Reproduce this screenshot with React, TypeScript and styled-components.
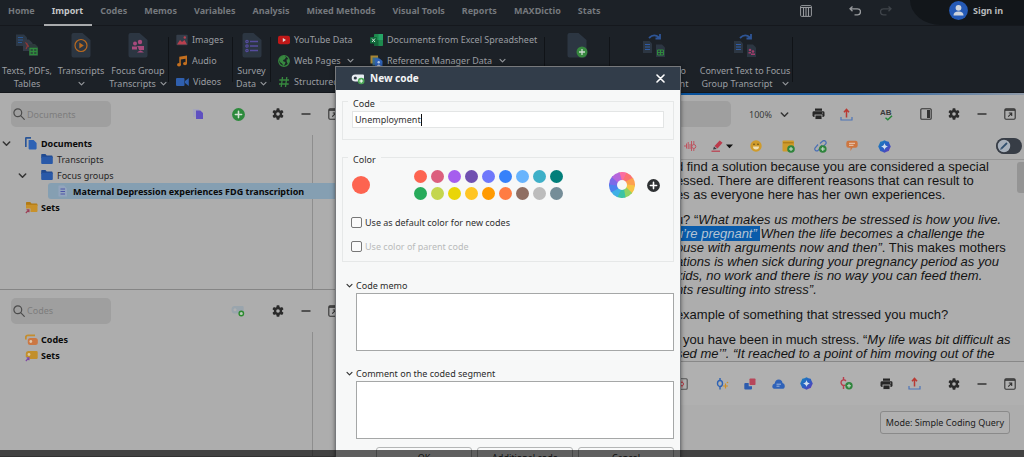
import React from 'react';
import styled, { createGlobalStyle, css } from 'styled-components';

const Global = createGlobalStyle`
  * { box-sizing: border-box; }
  html, body, #root { height: 100%; margin: 0; }
  body { overflow: hidden; background: #adadad; }
  body, button, input, textarea, select { font-family: "Noto Sans", "Open Sans", sans-serif; font-size: 9px; line-height: 13px; }
  button { border: 0; background: none; padding: 0; margin: 0; color: inherit; }
  svg { display: block; flex: none; }
`;

const Page = styled.div`
  position: relative;
  height: 100vh;
  display: flex;
  flex-direction: column;
  overflow: hidden;
`;

/* ---------- header ---------- */

const Header = styled.header`
  background: #1c2127;
  color: #9b9ea2;
  border-bottom: 1px solid #14171c;
`;
const TopBar = styled.div`
  display: flex;
  height: 26px;
  border-bottom: 1px solid #15181d;
`;
const Tabs = styled.nav`
  display: flex;
  flex: 1;
`;
const Tab = styled.button<{ $active?: boolean }>`
  height: 26px;
  padding: 0 9px 3px 8px;
  font-weight: 700;
  white-space: nowrap;
  color: ${p => (p.$active ? '#c4c6c8' : '#75797e')};
  border-bottom: 2px solid ${p => (p.$active ? '#a9abad' : 'transparent')};
`;
const TopActions = styled.div`
  display: flex;
  align-items: center;
  padding: 0 18px 4px 0;
  gap: 19px;
`;
const GridButton = styled.button`
  margin-right: 18px;
`;
const Account = styled.button`
  display: flex;
  align-items: center;
  gap: 5px;
  width: 114px;
  padding: 0 0 5px 39px;
  background: #12161a;
  border-bottom-left-radius: 32px 26px;
  font-weight: 700;
  color: #b9bbbd;
  white-space: nowrap;
`;

const Ribbon = styled.div`
  display: flex;
  height: 66px;
`;
const BigButton = styled.button<{ $w: number }>`
  flex: none;
  width: ${p => p.$w}px;
  height: 66px;
  padding-top: 6px;
  display: flex;
  flex-direction: column;
  align-items: center;
  gap: 5px;
  white-space: nowrap;
  text-align: center;
`;
const BigLabel = styled.span`
  display: flex;
  flex-direction: column;
  align-items: center;
`;
const LabelLine = styled.span<{ $gap?: number }>`
  display: flex;
  align-items: center;
  justify-content: center;
  gap: ${p => p.$gap ?? 4}px;
  height: 13px;
`;
const Divider = styled.span`
  width: 1px;
  margin: 11px 0 10px;
  background: #101317;
`;
const SmallColumn = styled.div<{ $w: number }>`
  flex: none;
  width: ${p => p.$w}px;
  padding: 3px 0 0 7px;
  display: flex;
  flex-direction: column;
`;
const SmallButton = styled.button`
  display: flex;
  align-items: center;
  height: 21px;
  gap: 4px;
  white-space: nowrap;
`;

/* ---------- workspace ---------- */

const Workspace = styled.main`
  flex: 1;
  min-height: 0;
  display: grid;
  grid-template-columns: 34% 1fr;
  grid-template-rows: minmax(0, 1fr);
  background: #adadad;
`;
const LeftSide = styled.section`
  display: grid;
  grid-template-rows: 54fr 46fr;
  min-width: 0;
`;
const Panel = styled.section`
  display: flex;
  flex-direction: column;
  min-height: 0;
  border-bottom: 1px solid #858585;
`;
const PanelBar = styled.div`
  display: flex;
  align-items: center;
  height: 42px;
  padding-left: 11px;
`;
const SearchBox = styled.label`
  display: flex;
  align-items: center;
  gap: 2px;
  width: 100px;
  height: 26px;
  padding-left: 2px;
  border-radius: 5px;
  background: #9f9f9f;
`;
const SearchInput = styled.input`
  width: 80px;
  padding: 0;
  border: 0;
  outline: 0;
  background: transparent;
  &::placeholder { color: #7d7d7d; opacity: 1; }
`;
const Spacer = styled.span`
  flex: 1;
`;
const Tools = styled.div<{ $after?: number }>`
  display: flex;
  flex: none;
  margin-right: ${p => p.$after ?? 12}px;
`;
const Tool = styled.button<{ $w?: number }>`
  display: flex;
  align-items: center;
  justify-content: center;
  gap: 3px;
  width: ${p => p.$w ?? 28}px;
  height: 24px;
`;
const Tree = styled.ul`
  flex: 1;
  margin: 0;
  padding: 0;
  list-style: none;
  background: linear-gradient(90deg, transparent calc(100% - 36px), #8e8e8e 0, #8e8e8e calc(100% - 35px), transparent 0);
`;
const TreeRow = styled.li<{ $level: number; $bold?: boolean; $selected?: boolean }>`
  display: flex;
  align-items: center;
  height: 16px;
  margin-left: ${p => p.$level * 16}px;
  font-weight: ${p => (p.$bold ? 700 : 400)};
  color: ${p => (p.$bold ? '#0a0a0a' : '#262626')};
  white-space: nowrap;
  ${p => p.$selected && css`background: #859fb2; border-radius: 3px 0 0 3px;`}
`;
const Twisty = styled.span<{ $narrow?: boolean }>`
  display: flex;
  width: ${p => (p.$narrow ? 9 : 25)}px;
  padding-left: 2px;
`;
const NodeIcon = styled.span`
  display: flex;
  width: 16px;
`;

/* ---------- document browser ---------- */

const RightSide = styled.section`
  display: grid;
  grid-template-rows: minmax(0, 1fr) auto;
  min-width: 0;
`;
const Browser = styled.section`
  display: flex;
  flex-direction: column;
  min-height: 0;
  overflow: hidden;
  border-top: 2px solid;
  border-image: linear-gradient(90deg, #07509a 50%, #2560a0 75%, #8f9aa8 100%) 1;
`;
const BrowserBar = styled.div`
  display: flex;
  flex: none;
  align-items: center;
  justify-content: flex-end;
  height: 38px;
`;
const BrowserSearch = styled.input`
  width: 300px;
  height: 26px;
  margin-right: 18px;
  border: 0;
  border-radius: 5px;
  background: #9f9f9f;
`;
const Zoom = styled.label`
  display: flex;
  align-items: center;
  width: 55px;
`;
const ZoomSelect = styled.select`
  appearance: none;
  width: 31px;
  padding: 0;
  border: 0;
  background: transparent;
  color: #3a3a3a;
`;
const CodingBar = styled.div`
  display: flex;
  flex: none;
  align-items: center;
  justify-content: flex-end;
  height: 27px;
  border-bottom: 1px solid #969696;
`;
const ToggleTrack = styled.button`
  display: flex;
  align-items: center;
  width: 26px;
  height: 16px;
  margin-right: 2px;
  border-radius: 8px;
  background: #373d46;
`;
const Transcript = styled.div`
  flex: 1;
  min-height: 0;
  display: grid;
  grid-template-columns: 1fr 7px;
  overflow: hidden;
`;
const Lines = styled.div`
  overflow: hidden;
  font-family: "Liberation Sans", Arial, sans-serif;
  font-size: 13px;
  line-height: 14px;
  color: #141414;
`;
const Paragraph = styled.p`
  margin: 0 0 11px;
`;
const TextLine = styled.span`
  display: grid;
  grid-template-columns: 49% 1fr;
  white-space: pre;
`;
const LineStart = styled.span`
  text-align: right;
`;
const Mark = styled.mark`
  background: #0a5cab;
  color: #b4c4d4;
`;
const ScrollThumb = styled.span`
  height: 31px;
  margin-top: 2px;
  border-radius: 3px 0 0 3px;
  background: #949494;
`;
const Retrieved = styled.section`
  height: 96px;
  border-top: 1px solid #888;
`;
const RetrievedBar = styled.div`
  display: flex;
  align-items: center;
  justify-content: flex-end;
  height: 43px;
  background: #b0b0b0;
`;
const ModeRow = styled.div`
  display: flex;
  justify-content: flex-end;
  padding: 6px 14px;
`;
const ModeButton = styled.button`
  width: 130px;
  height: 23px;
  border: 1px solid #8a8a8a;
  border-radius: 3px;
  color: #1c1c1c;
  background: #b0b0b0;
  white-space: nowrap;
`;

/* ---------- dialog ---------- */

const Overlay = styled.div`
  position: absolute;
  inset: 66px 8px 0 0;
  display: flex;
  justify-content: center;
  align-items: flex-start;
`;
const Dialog = styled.form`
  width: 346px;
  background: #f7f8f8;
  color: #2b2b2b;
  border: 1px solid #77797c;
  border-bottom: 0;
  box-shadow: 0 0 4px rgba(0, 0, 0, 0.5);
`;
const TitleBar = styled.div`
  display: flex;
  align-items: center;
  height: 23px;
  padding: 0 15px;
  gap: 5px;
  background: #323d4a;
  color: #f4f5f6;
`;
const Title = styled.h1`
  flex: 1;
  margin: 0;
  font-size: 10px;
  line-height: 15px;
  font-weight: 700;
`;
const DialogBody = styled.div`
  padding: 2px 6px 0;
`;
const Group = styled.fieldset<{ $space: number }>`
  margin: 0 0 ${p => p.$space}px;
  padding: 0 9px 3px;
  min-width: 0;
  border: 1px solid #e6e8e8;
`;
const Legend = styled.legend`
  margin-left: -4px;
  padding: 5px 5px 0;
  height: 18px;
`;
const CodeField = styled.div`
  display: flex;
  align-items: center;
  height: 17px;
  margin: 1px 0 8px;
  padding: 0 2px;
  border: 1px solid #e3e5e5;
  background: #fff;
`;
const CodeInput = styled.input`
  field-sizing: content;
  padding: 0;
  border: 0;
  outline: 0;
  background: transparent;
  color: #333;
  caret-color: transparent;
`;
const TextCursor = styled.span`
  width: 1px;
  height: 12px;
  background: #111;
`;
const Palette = styled.div`
  display: flex;
  align-items: center;
  height: 38px;
  margin-bottom: 6px;
`;
const Chosen = styled.span`
  width: 18px;
  height: 18px;
  margin-right: 44px;
  border-radius: 50%;
  background: #fd6450;
`;
const Swatches = styled.div`
  display: grid;
  grid-template-columns: repeat(9, 13px);
  gap: 4px;
  flex: 1;
`;
const Swatch = styled.button<{ $c: string }>`
  width: 13px;
  height: 13px;
  border-radius: 50%;
  background: ${p => p.$c};
`;
const WheelButtons = styled.div`
  display: flex;
  align-items: center;
  gap: 12px;
  padding-right: 4px;
`;
const Check = styled.label<{ $off?: boolean }>`
  display: flex;
  align-items: center;
  gap: 3px;
  height: 24px;
  color: ${p => (p.$off ? '#b9bbbb' : '#2f2f2f')};
`;
const Box = styled.input`
  appearance: none;
  width: 11px;
  height: 11px;
  margin: 0 0 0 -1px;
  border: 1px solid #777;
  border-radius: 2px;
  background: #fafafa;
`;
const Section = styled.div`
  margin-bottom: 15px;
`;
const SectionLabel = styled.label`
  display: flex;
  align-items: center;
  gap: 3px;
  height: 15px;
  padding-left: 4px;
`;
const Memo = styled.textarea`
  display: block;
  width: calc(100% - 14px);
  height: 58px;
  margin-left: 14px;
  border: 1px solid #a5a7a7;
  border-radius: 0;
  outline: 0;
  resize: none;
  background: #fff;
`;
const DialogButtons = styled.div`
  display: grid;
  grid-template-columns: repeat(3, 1fr);
  gap: 5px;
  margin: -7px 0 0 34px;
`;
const DialogButton = styled.button`
  height: 20px;
  border: 1px solid #b4b6b6;
  border-radius: 3px;
  background: #f9fafa;
`;
const PlayerShade = styled.div`
  position: absolute;
  inset: auto 0 0 0;
  height: 7px;
  background: rgba(0, 0, 0, 0.62);
`;

/* ---------- icons ---------- */

const Chevron = ({ c = '#333', s = 9 }: { c?: string; s?: number }) => (
  <svg width={s} height={s} viewBox="0 0 9 9" fill="none" stroke={c} strokeWidth="1.5" strokeLinecap="round" strokeLinejoin="round"><path d="M1.3 3l3.2 3.2L7.7 3" /></svg>
);
const RibbonChevron = () => <Chevron c="#94979b" s={7} />;
const SearchIcon = () => (
  <svg width="12" height="12" viewBox="0 0 12 12" fill="none" stroke="#4c4c4c" strokeWidth="1.2" strokeLinecap="round"><circle cx="4.8" cy="4.8" r="3.9" /><path d="M7.7 7.7l3.6 3.6" /></svg>
);
const Gear = () => (
  <svg width="12" height="12" viewBox="0 0 12 12"><g fill="#2b2b2b">
    {[0, 60, 120].map(a => <rect key={a} x="4.5" y="0.3" width="3" height="11.4" rx="0.8" transform={`rotate(${a} 6 6)`} />)}
    <circle cx="6" cy="6" r="4.1" /></g><circle cx="6" cy="6" r="1.8" fill="#adadad" /></svg>
);
const Minus = () => <svg width="10" height="10" viewBox="0 0 10 10"><path d="M.5 5h9" stroke="#333" strokeWidth="1.5" /></svg>;
const PopOut = () => (
  <svg width="12" height="12" viewBox="0 0 12 12" fill="none" stroke="#333"><rect x=".8" y=".8" width="10.4" height="10.4" rx="1.2" strokeWidth="1.1" /><path d="M1 2h10" strokeWidth="1.6" /><path d="M4.2 8.6l3.3-3.3M4.8 5h2.9v2.9" strokeWidth="1.1" /></svg>
);
const PlusCircle = ({ s = 13, c = '#2d8a3c', p = '#d5e2d6' }: { s?: number; c?: string; p?: string }) => (
  <svg width={s} height={s} viewBox="0 0 13 13"><circle cx="6.5" cy="6.5" r="6.4" fill={c} /><path d="M6.5 3.4v6.2M3.4 6.5h6.2" stroke={p} strokeWidth="1.6" strokeLinecap="round" /></svg>
);
const CopyDocs = () => (
  <svg width="12" height="12" viewBox="0 0 12 12"><path d="M1 1h6v8H1z" fill="#a4a4bb" /><path d="M4 2.5h4.3L11 5v6H4z" fill="#5f50c0" /></svg>
);
const DocsIcon = () => (
  <svg width="12" height="13" viewBox="0 0 12 13"><path d="M.8 10V1.4Q.8.8 1.5.8H6" fill="none" stroke="#2a5597" strokeWidth="1.7" /><path d="M3.6 3h5l3 3v5.6q0 .8-.8.8H4.4q-.8 0-.8-.8z" fill="#2d62b5" /></svg>
);
const Folder = ({ a = '#2959a8', b = '#214a8f' }: { a?: string; b?: string }) => (
  <svg width="12" height="12" viewBox="0 0 12 12"><path d="M.2 1.8Q.2 1 1 1h3.4l1.3 1.6h5Q11.6 2.6 11.6 3.400V5H.2z" fill={b} /><rect x=".2" y="3.800" width="11.600" height="7.200" rx=".9" fill={a} /></svg>
);
const SetFolder = () => (
  <svg width="13" height="13" viewBox="0 0 13 13"><path d="M1 1.800Q1 1 1.800 1h3.400l1.300 1.500h5Q12.400 2.500 12.400 3.400V5H1z" fill="#b27a15" /><path d="M1 3.800h11.500v6.300q0 .9-.9.9H5.500V7.500H1z" fill="#c8912b" /><path d="M.8 12L3.800 9M1.500 8.800h2.500v2.500" fill="none" stroke="#9b3f55" strokeWidth="1.100" /></svg>
);
const DocFile = () => (
  <svg width="11" height="12" viewBox="0 0 11 12"><path d="M1.500 .5h5.500L10 3.500v8H1.500z" fill="#93a5bd" /><path d="M3.500 4h4.500M3.500 6.500h4.500M3.500 9h4.500" stroke="#4c55a8" /></svg>
);
const CodesIcon = () => (
  <svg width="13" height="12" viewBox="0 0 13 12"><path d="M.8 5.500V3.500Q.8 1.300 3 1.300h7" fill="none" stroke="#c48d2e" strokeWidth="1.800" /><rect x="2.800" y="4" width="10" height="7" rx="2.500" fill="#cb7743" /><circle cx="5.800" cy="7.500" r="1.400" fill="#e0c5a8" /></svg>
);
const CodeSetIcon = () => (
  <svg width="13" height="12" viewBox="0 0 13 12"><path d="M3.200 1H11.500Q12.700 1 12.700 2.200V7.800Q12.700 9 11.500 9H5L3 7H.8V3.500Q.8 1 3.200 1z" fill="#c28f2b" /><circle cx="4" cy="4.500" r="1.400" fill="#dbc79a" /><path d="M.8 11L3.800 8M1.500 7.800h2.500v2.500" fill="none" stroke="#7d48a5" strokeWidth="1.100" /></svg>
);
const CodePlusPale = () => (
  <svg width="14" height="12" viewBox="0 0 14 12"><path d="M3.500 1h8Q12.700 1 12.700 2.200V7H8v1.500H3.500Q.5 8.500.5 4.800T3.500 1z" fill="#9aa5ad" /><circle cx="4" cy="4.800" r="1.500" fill="#b1b1b1" /><circle cx="10.300" cy="8.500" r="2.200" fill="#b9cdb9" stroke="#2c8a2f" strokeWidth="1.400" /></svg>
);
const Printer = () => (
  <svg width="13" height="12" viewBox="0 0 13 12"><path d="M3 .5h7v2.300H3z" fill="#262626" /><rect x=".5" y="3.300" width="12" height="5.700" rx="1.400" fill="#262626" /><rect x="3" y="7" width="7" height="4.500" fill="#262626" stroke="#adadad" strokeWidth=".9" /><circle cx="10.600" cy="5" r=".6" fill="#adadad" /></svg>
);
const Upload = () => (
  <svg width="13" height="13" viewBox="0 0 13 13" fill="none"><path d="M1 9v3h11V9" stroke="#4d75b8" strokeWidth="1.200" /><path d="M6.500 9.500V2M4 4.300l2.500-2.800L9 4.300" stroke="#b93a33" strokeWidth="1.500" /></svg>
);
const SpellCheck = () => (
  <svg width="13" height="13" viewBox="0 0 13 13" fill="none"><text x="0" y="7" fontSize="8" fontWeight="700" fontFamily="Liberation Sans, sans-serif" fill="#3a3a3a">AB</text><path d="M5.500 9.800l2.300 2L12 7.800" stroke="#27873a" strokeWidth="1.500" /></svg>
);
const SidePanel = () => (
  <svg width="12" height="12" viewBox="0 0 12 12"><rect x=".8" y=".8" width="10.400" height="10.400" rx="1" fill="none" stroke="#333" strokeWidth="1.100" /><rect x="7" y="2" width="3" height="8" fill="#333" /></svg>
);
const Wave = () => (
  <svg width="13" height="12" viewBox="0 0 13 12" fill="none" stroke="#bd5560" strokeWidth="1"><path d="M1 5v2M2.500 3.500v5M4.200 2v7M6 4v5M7.500 1v10" /><circle cx="9.800" cy="6.500" r="2" /><path d="M9.800 1v3.500M9.800 8.500V11" /></svg>
);
const Pen = () => (
  <svg width="12" height="12" viewBox="0 0 12 12"><path d="M8.700.5l2.800 2.300-5 5.700-3-2.400z" fill="#bb3b4c" /><path d="M3 6.600l2.800 2.300L2 9.600z" fill="#3c3c44" /><path d="M.5 11.200h8.500" stroke="#bb3b4c" strokeWidth="1.200" /></svg>
);
const Caret = () => <svg width="7" height="5" viewBox="0 0 7 5"><path d="M0 .5h7L3.500 4.300z" fill="#111" /></svg>;
const Smile = () => (
  <svg width="12" height="12" viewBox="0 0 12 12"><circle cx="6" cy="6" r="5.700" fill="#cf9b2b" /><path d="M3 6.500h6a3 3 0 01-6 0z" fill="#f0e0b4" /><circle cx="4" cy="4.200" r=".8" fill="#5f4713" /><circle cx="8" cy="4.200" r=".8" fill="#5f4713" /></svg>
);
const NotePlus = () => (
  <svg width="13" height="13" viewBox="0 0 13 13"><rect x=".5" y=".5" width="11.500" height="11" rx="1" fill="#cf9b2b" /><path d="M1 2.800h10.500" stroke="#a37414" /><circle cx="9" cy="9" r="3.800" fill="#2f843d" /><path d="M9 7v4M7 9h4" stroke="#cfe0d1" /></svg>
);
const LinkPlus = () => (
  <svg width="13" height="13" viewBox="0 0 13 13" fill="none"><path d="M6 3.500L8.500 1.300a2 2 0 013 2.800L7 9M8 5L4 10.500a2 2 0 01-3-2.500l3-3.500" stroke="#4a70b5" strokeWidth="1.200" /><circle cx="8.800" cy="9" r="3.800" fill="#2f843d" /><path d="M8.800 7v4M6.800 9h4" stroke="#cfe0d1" /></svg>
);
const Comment = () => (
  <svg width="12" height="12" viewBox="0 0 12 12"><path d="M2.500.8h7Q11.700.8 11.700 3v2.500q0 2.300-2.200 2.300H6.500L4.500 11V7.800h-2Q.3 7.800.3 5.500V3Q.3.8 2.500.8z" fill="#cd7640" /><path d="M3 3.300h6M3 5.300h4.500" stroke="#e9cdb8" /></svg>
);
const Assist = () => (
  <svg width="13" height="13" viewBox="0 0 13 13"><defs><linearGradient id="as" x1="0" y1="0" x2="1" y2="1"><stop offset="0" stopColor="#1a86b8" /><stop offset=".5" stopColor="#2860c4" /><stop offset="1" stopColor="#6b35b5" /></linearGradient></defs><path d="M6.500.2l2 1 2.200.6.900 2.200 1.200 2.500-1.200 2.400-.900 2.200-2.200.7-2 1-2-1-2.200-.7-.9-2.200L.2 6.500l1.200-2.500.9-2.200 2.200-.6z" fill="url(#as)" /><path d="M6.500 3q.5 3 3.500 3.500-3 .5-3.500 3.500Q6 7 3 6.500 6 6 6.500 3z" fill="#d2e0ee" /></svg>
);
const PencilKnob = () => (
  <svg width="16" height="16" viewBox="0 0 16 16"><circle cx="8" cy="8" r="7" fill="#a7b0bb" stroke="#373d46" strokeWidth="1.500" /><path d="M5.300 10.700L11 5" stroke="#31506f" strokeWidth="1.800" /><path d="M4.200 11.800l.5-1.700 1.200 1.200z" fill="#31506f" /></svg>
);
const CodeWindow = () => (
  <svg width="12" height="12" viewBox="0 0 12 12" fill="none"><rect x=".8" y=".8" width="10.400" height="10.400" rx="1" stroke="#555" strokeWidth="1.100" /><circle cx="6" cy="6" r="1.600" stroke="#b5404b" /><path d="M6 2.500v2M6 7.500v2" stroke="#b5404b" /></svg>
);
const CodeSpark = () => (
  <svg width="13" height="12" viewBox="0 0 13 12" fill="none"><ellipse cx="4" cy="5.500" rx="2.500" ry="3" stroke="#2d62b5" strokeWidth="1.400" /><path d="M4 0v2.500M4 8.500V11.500" stroke="#2d62b5" strokeWidth="1.400" /><path d="M9.500 5.500v5M7 8h5" stroke="#cf8f26" strokeWidth="1.200" /><circle cx="11.500" cy="4.500" r=".8" fill="#cf8f26" /></svg>
);
const Squares = () => (
  <svg width="12" height="12" viewBox="0 0 12 12"><rect x="5.500" y=".5" width="6" height="6.500" rx=".8" fill="#b8475a" /><path d="M1.300 5h3.400v3.200h3.300v2.300q0 1-1 1H1.300q-1 0-1-1V6q0-1 1-1z" fill="#2d5cae" /></svg>
);
const Cloud = () => (
  <svg width="13" height="12" viewBox="0 0 13 12"><path d="M3.200 10.800Q.3 10.800.3 8.200.3 6 2.700 5.500 3.300 1.500 6.800 1.500q3.200 0 3.700 3.500 2.300.4 2.300 2.900 0 2.900-2.700 2.900z" fill="#2f62b8" /><path d="M4.500 6.200h4.500M4.500 8.200h3" stroke="#9db6dd" /></svg>
);
const CodeAdd = () => (
  <svg width="13" height="13" viewBox="0 0 13 13" fill="none"><path d="M3.500 0v2.800M3.500 8.500V12M6 4Q3.500 1.500 1.500 4q-1 1.800.3 3.500 1.500 1.800 3.700.5" stroke="#b8404e" strokeWidth="1.400" /><circle cx="9" cy="8.800" r="3.700" fill="#2f843d" /><path d="M9 6.800v4M7 8.800h4" stroke="#cfe0d1" /></svg>
);

const Sheet = ({ children }: { children?: React.ReactNode }) => (
  <svg width="22" height="27" viewBox="0 0 22 27"><path d="M3 1h9.500L20.500 8v15.500q0 2-2 2h-15q-2 0-2-2V3q0-2 2-2z" fill="#2c3642" />{children}</svg>
);
const TextsIcon = () => (
  <svg width="24" height="27" viewBox="0 0 24 27"><path d="M1 2.500h8L12 5.500v8.500H1z" fill="#2c3846" /><path d="M3 5.500h5M3 8h5M3 10.500h4" stroke="#2b5791" strokeWidth="1.200" /><path d="M8 7.500h6l3.500 3.500v8H8z" fill="#333a46" /><path d="M11 17q3-5 0-6 2 4 5 4" fill="none" stroke="#8f3838" strokeWidth="1.100" /><path d="M14 12h6l3 3v9h-9z" fill="#2c3a3b" /><path d="M15 16.500h7v6h-7zM15 19.500h7M18.500 16.500v6" fill="none" stroke="#2f8a3d" strokeWidth="1.300" /></svg>
);
const ConvertIcon = ({ people }: { people?: boolean }) => (
  <svg width="24" height="27" viewBox="0 0 24 27"><path d="M7 6Q12 1 17 5.500M18 2v4.500h-4.500" fill="none" stroke="#2e5596" strokeWidth="1.800" /><path d="M1 9h6.500L10 11.500V21H1z" fill="#2c3642" /><path d="M3 12.500h5M3 15h5M3 17.500h5" stroke="#2f5ca6" strokeWidth="1.200" /><path d="M14 12.500h6l3 3V25h-9z" fill="#2c3642" />
    {people ? <g fill="#a33c6b"><circle cx="17" cy="18" r="1.300" /><circle cx="20" cy="19.500" r="1.300" /><path d="M15.500 20h2.500v1.500h-2.500zM18 21.500h4V23h-4z" /></g> : <path d="M15.500 18h6v5h-6zM15.500 20.500h6M18.500 18v5" fill="none" stroke="#2f8a3d" />}
  </svg>
);
const Images = () => <svg width="12" height="12" viewBox="0 0 12 12"><rect x=".3" y=".8" width="11.400" height="10.500" rx="1" fill="#343d49" /><path d="M1 10.500L4 6l2 2 2.500-2L11 10.500z" fill="#b8404e" /><circle cx="8.800" cy="3.500" r="1.200" fill="#b8404e" /></svg>;
const Audio = () => <svg width="12" height="12" viewBox="0 0 12 12" fill="#c4701f"><path d="M3.300 1.800L11 .5v3L4.800 4.500V10H3.300z" /><path d="M9.500 2H11v6.500H9.500z" /><ellipse cx="3" cy="9.800" rx="2" ry="1.700" /><ellipse cx="9" cy="8.600" rx="2" ry="1.700" /></svg>;
const Video = () => <svg width="13" height="10" viewBox="0 0 13 10" fill="#2f5fae"><rect x="0" y="1" width="8.500" height="8" rx="1" /><path d="M9 4l3.800-3v8L9 6z" /></svg>;
const YouTube = () => <svg width="12" height="12" viewBox="0 0 12 12"><rect x="0" y="1.800" width="12" height="8.500" rx="2" fill="#c01818" /><path d="M4.800 4v4L8 6z" fill="#ddd" /></svg>;
const Globe = () => <svg width="12" height="12" viewBox="0 0 12 12"><circle cx="6" cy="6" r="5.300" fill="#1c2127" stroke="#37883f" strokeWidth="1.200" /><path d="M1 5Q2 1 6.500 .8L8 2.500 6.500 4.500 5 5 5.500 6.500 7.500 7 7 9 5.500 11 4 8.500 2.500 7.500zM8.500 4.500l2.500-.5.5 2.500L10 9 8.800 7z" fill="#37883f" /></svg>;
const Hash = () => <svg width="12" height="12" viewBox="0 0 12 12" stroke="#37883f" strokeWidth="1.300"><path d="M4.500 1l-1.300 10M8.800 1L7.500 11M1.300 4h9.700M1 8h9.700" /></svg>;
const Excel = () => <svg width="13" height="12" viewBox="0 0 13 12"><rect x="4" y="0" width="9" height="12" rx=".8" fill="#1e8a4e" /><path d="M8.500 0H13v6H8.500z" fill="#26a566" /><path d="M4 6h4.500v6H4z" fill="#14623a" /><rect x="0" y="3" width="7" height="6.500" rx=".7" fill="#0f6a3a" /><path d="M2 4.500l3 3.500M5 4.500L2 8" stroke="#cfe0d6" /></svg>;
const RefManager = () => <svg width="13" height="12" viewBox="0 0 13 12"><rect x=".5" y=".5" width="7.500" height="8" fill="#a98632" /><rect x="2.500" y="2.500" width="6" height="8" fill="#3b6d8a" /><path d="M5 3.500h4.500L12.500 6v6H5z" fill="#2f62b8" /><circle cx="8.700" cy="7.300" r="1.200" fill="#b7c9e6" /><path d="M6.500 11q2.200-3 4.400 0z" fill="#b7c9e6" /></svg>;
const ColumnsIcon = () => <svg width="12" height="12" viewBox="0 0 12 12" fill="none" stroke="#989b9e"><rect x=".6" y=".6" width="10.800" height="10.800" rx="1" /><path d="M.6 2.500h10.800M3.500 3v8M6 3v8M8.500 3v8" strokeWidth="1.100" /></svg>;
const Undo = ({ c, flip }: { c: string; flip?: boolean }) => <svg width="12" height="10" viewBox="0 0 12 10" fill="none" stroke={c} strokeWidth="1.300" transform={flip ? 'scale(-1 1)' : undefined}><path d="M3.500.5L1 2.800l2.500 2.500M1 2.800h7.500a3 3 0 010 6H5.500" /></svg>;
const Avatar = () => <svg width="19" height="19" viewBox="0 0 19 19"><circle cx="9.500" cy="9.500" r="9.400" fill="#2459b5" /><circle cx="9.500" cy="6.800" r="2.900" fill="#cdd3dc" /><path d="M4.500 14.500q0-4 5-4t5 4z" fill="#cdd3dc" /></svg>;
const TagPlus = () => <svg width="14" height="12" viewBox="0 0 14 12"><path d="M4.200 1.500H12q1 0 1 1V6H8v2.500H4.200Q.7 8.500.7 5t3.500-3.500z" fill="#e8edf2" /><circle cx="4.300" cy="5" r="1.600" fill="#323d4a" /><circle cx="10.200" cy="8" r="3.300" fill="#4ca858" /><path d="M10.200 6.200v3.600M8.400 8H12" stroke="#fff" /></svg>;
const Close = () => <svg width="9" height="9" viewBox="0 0 9 9" stroke="#fff" strokeWidth="1.600" strokeLinecap="round"><path d="M1 1l7 7M8 1L1 8" /></svg>;

const wheelColors = ['#fb6da0', '#fb7272', '#fda04f', '#f7c445', '#8fd364', '#3cc3a4', '#3fb0e6', '#4c82ee', '#7c6ae8', '#b666dc'];
const Wheel = () => (
  <svg width="26" height="26" viewBox="-13 -13 26 26">
    {wheelColors.map((c, i) => (
      <path key={c} d="M-2 -3.500L-3.500 -12.500A13 13 0 0 1 5.500 -11.800L2.500 -3.500z" fill={c} transform={`rotate(${i * 36})`} />
    ))}
    <circle r="5" fill="#f7f8f8" />
  </svg>
);

/* ---------- content ---------- */

const tabs = ['Home', 'Import', 'Codes', 'Memos', 'Variables', 'Analysis', 'Mixed Methods', 'Visual Tools', 'Reports', 'MAXDictio', 'Stats'];
const swatches = ['#fd6450', '#dc5f7e', '#a55eee', '#7050b0', '#6f78fb', '#3681fa', '#68b4fd', '#3eb0c8', '#027f7a', '#28ab5b', '#c4d64f', '#e9d508', '#ffc523', '#ff9a02', '#ff7c43', '#8f6e62', '#bcbcbc', '#758d98'];

const paragraphs: [string, React.ReactNode][][] = [
  [
    ['an', 'd find a solution because you are considered a special'],
    ['str', 'essed. There are different reasons that can result to'],
    ['', 'es as everyone here has her own experiences.'],
  ],
  [
    ['yo', <>u? “<i>What makes us mothers be stressed is how you live.</i></>],
    ['yo', <i><Mark>u’re pregnant” </Mark>When the life becomes a challenge the</i>],
    ['sp', <><i>ouse with arguments now and then”</i>. This makes mothers</>],
    ['situ', <i>ations is when sick during your pregnancy period as you</i>],
    ['', <i>kids, no work and there is no way you can feed them.</i>],
    ['', <i>nts resulting into stress”.</i>],
  ],
  [['', 'example of something that stressed you much?']],
  [
    ['', <>t you have been in much stress. “<i>My life was bit difficult as</i></>],
    ['stres', <i>sed me’”. “It reached to a point of him moving out of the</i>],
  ],
];

export default function App() {
  return (
    <Page>
      <Global />
      <Header>
        <TopBar>
          <Tabs>{tabs.map(t => <Tab key={t} $active={t === 'Import'}>{t}</Tab>)}</Tabs>
          <TopActions>
            <GridButton aria-label="Layout"><ColumnsIcon /></GridButton>
            <button aria-label="Undo"><Undo c="#989b9e" /></button>
            <button aria-label="Redo"><Undo c="#3f444a" flip /></button>
          </TopActions>
          <Account><Avatar />Sign in</Account>
        </TopBar>
        <Ribbon>
          <BigButton $w={54}><TextsIcon /><BigLabel><LabelLine>Texts, PDFs,</LabelLine><LabelLine>Tables</LabelLine></BigLabel></BigButton>
          <BigButton $w={54}>
            <Sheet><circle cx="11" cy="13.500" r="6" fill="none" stroke="#b96a20" strokeWidth="1.200" /><path d="M9.300 10.500v6l4.500-3z" fill="#b96a20" /></Sheet>
            <BigLabel><LabelLine>Transcripts</LabelLine><LabelLine><RibbonChevron /></LabelLine></BigLabel>
          </BigButton>
          <BigButton $w={60}>
            <Sheet><g fill="#a84a7c"><circle cx="8" cy="11.500" r="2" /><circle cx="13" cy="10" r="2.200" /><path d="M5 14.500h5v3H5zM10 14h7v4h-4z" /><circle cx="13.500" cy="16.500" r="2" /><path d="M10 20.500q3.500-3.500 7 0z" /></g></Sheet>
            <BigLabel><LabelLine>Focus Group</LabelLine><LabelLine>Transcripts <RibbonChevron /></LabelLine></BigLabel>
          </BigButton>
          <Divider />
          <SmallColumn $w={63}>
            <SmallButton><Images />Images</SmallButton>
            <SmallButton><Audio />Audio</SmallButton>
            <SmallButton><Video />Videos</SmallButton>
          </SmallColumn>
          <Divider />
          <BigButton $w={37}>
            <Sheet><g fill="none" stroke="#564c9e" strokeWidth="1.200"><circle cx="6" cy="9.500" r="1.200" /><circle cx="6" cy="14" r="1.200" /><circle cx="6" cy="18.500" r="1.200" /><path d="M9 9.500h8M9 14h8M9 18.500h8" strokeWidth="1.500" /></g></Sheet>
            <BigLabel><LabelLine>Survey</LabelLine><LabelLine>Data <RibbonChevron /></LabelLine></BigLabel>
          </BigButton>
          <Divider />
          <SmallColumn $w={92}>
            <SmallButton><YouTube />YouTube Data</SmallButton>
            <SmallButton><Globe />Web Pages&nbsp; <RibbonChevron /></SmallButton>
            <SmallButton><Hash />Structured</SmallButton>
          </SmallColumn>
          <SmallColumn $w={181}>
            <SmallButton><Excel />Documents from Excel Spreadsheet</SmallButton>
            <SmallButton><RefManager />Reference Manager Data&nbsp; <RibbonChevron /></SmallButton>
          </SmallColumn>
          <Divider />
          <BigButton $w={64}>
            <Sheet><circle cx="16" cy="20" r="5.500" fill="#37883f" /><path d="M16 17v6M13 20h6" stroke="#ccd9ce" strokeWidth="1.300" /></Sheet>
            <BigLabel><LabelLine>New</LabelLine><LabelLine>Document</LabelLine></BigLabel>
          </BigButton>
          <Divider />
          <BigButton $w={88}><ConvertIcon /><BigLabel><LabelLine>Convert Text to</LabelLine><LabelLine>Table Document</LabelLine></BigLabel></BigButton>
          <BigButton $w={94}><ConvertIcon people /><BigLabel><LabelLine>Convert Text to Focus</LabelLine><LabelLine $gap={9}>Group Transcript <RibbonChevron /></LabelLine></BigLabel></BigButton>
          <Divider />
        </Ribbon>
      </Header>

      <Workspace>
        <LeftSide>
          <Panel>
            <PanelBar>
              <SearchBox><SearchIcon /><SearchInput aria-label="Search documents" placeholder="Documents" /></SearchBox>
              <Spacer />
              <Tools><Tool aria-label="Copy"><CopyDocs /></Tool></Tools>
              <Tools><Tool aria-label="Add document"><PlusCircle /></Tool></Tools>
              <Tools $after={0}><Tool aria-label="Settings"><Gear /></Tool><Tool aria-label="Minimize"><Minus /></Tool><Tool aria-label="Undock"><PopOut /></Tool></Tools>
            </PanelBar>
            <Tree>
              <TreeRow $level={0} $bold><Twisty><Chevron /></Twisty><NodeIcon><DocsIcon /></NodeIcon>Documents</TreeRow>
              <TreeRow $level={1}><Twisty /><NodeIcon><Folder /></NodeIcon>Transcripts</TreeRow>
              <TreeRow $level={1}><Twisty><Chevron /></Twisty><NodeIcon><Folder /></NodeIcon>Focus groups</TreeRow>
              <TreeRow $level={3} $bold $selected><Twisty $narrow /><NodeIcon><DocFile /></NodeIcon>Maternal Depression experiences FDG transcription</TreeRow>
              <TreeRow $level={0} $bold><Twisty /><NodeIcon><SetFolder /></NodeIcon>Sets</TreeRow>
            </Tree>
          </Panel>
          <Panel>
            <PanelBar>
              <SearchBox><SearchIcon /><SearchInput aria-label="Search codes" placeholder="Codes" /></SearchBox>
              <Spacer />
              <Tools><Tool aria-label="New code"><CodePlusPale /></Tool></Tools>
              <Tools $after={0}><Tool aria-label="Settings"><Gear /></Tool><Tool aria-label="Minimize"><Minus /></Tool><Tool aria-label="Undock"><PopOut /></Tool></Tools>
            </PanelBar>
            <Tree>
              <TreeRow $level={0} $bold><Twisty /><NodeIcon><CodesIcon /></NodeIcon>Codes</TreeRow>
              <TreeRow $level={0} $bold><Twisty /><NodeIcon><CodeSetIcon /></NodeIcon>Sets</TreeRow>
            </Tree>
          </Panel>
        </LeftSide>

        <RightSide>
          <Browser>
            <BrowserBar>
              <BrowserSearch aria-label="Search in document" />
              <Zoom><ZoomSelect aria-label="Zoom" defaultValue="100%"><option>100%</option></ZoomSelect><Chevron /></Zoom>
              <Tools><Tool aria-label="Print"><Printer /></Tool><Tool aria-label="Export"><Upload /></Tool></Tools>
              <Tools><Tool aria-label="Spell check"><SpellCheck /></Tool></Tools>
              <Tools $after={0}><Tool aria-label="Sidebar"><SidePanel /></Tool><Tool aria-label="Settings"><Gear /></Tool><Tool aria-label="Minimize"><Minus /></Tool><Tool aria-label="Undock"><PopOut /></Tool></Tools>
            </BrowserBar>
            <CodingBar>
              <Tools $after={96}>
                <Tool aria-label="Code in vivo"><Wave /></Tool>
                <Tool $w={36} aria-label="Highlight"><Pen /><Caret /></Tool>
                <Tool $w={32} aria-label="Emoticode"><Smile /></Tool>
                <Tool $w={32} aria-label="New memo"><NotePlus /></Tool>
                <Tool $w={32} aria-label="New link"><LinkPlus /></Tool>
                <Tool $w={32} aria-label="Paraphrase"><Comment /></Tool>
                <Tool $w={32} aria-label="AI Assist"><Assist /></Tool>
              </Tools>
              <ToggleTrack aria-label="Edit mode"><PencilKnob /></ToggleTrack>
            </CodingBar>
            <Transcript>
              <Lines>
                {paragraphs.map((lines, i) => (
                  <Paragraph key={i}>
                    {lines.map(([start, rest], j) => <TextLine key={j}><LineStart>{start}</LineStart><span>{rest}</span></TextLine>)}
                  </Paragraph>
                ))}
              </Lines>
              <ScrollThumb />
            </Transcript>
          </Browser>
          <Retrieved>
            <RetrievedBar>
              <Tools><Tool aria-label="Code window"><CodeWindow /></Tool></Tools>
              <Tools><Tool aria-label="Smart coding"><CodeSpark /></Tool><Tool aria-label="Compare"><Squares /></Tool><Tool aria-label="Word cloud"><Cloud /></Tool><Tool aria-label="AI Assist"><Assist /></Tool></Tools>
              <Tools><Tool aria-label="Add code"><CodeAdd /></Tool></Tools>
              <Tools><Tool aria-label="Print"><Printer /></Tool><Tool aria-label="Export"><Upload /></Tool></Tools>
              <Tools $after={0}><Tool aria-label="Settings"><Gear /></Tool><Tool aria-label="Minimize"><Minus /></Tool><Tool aria-label="Undock"><PopOut /></Tool></Tools>
            </RetrievedBar>
            <ModeRow><ModeButton>Mode: Simple Coding Query</ModeButton></ModeRow>
          </Retrieved>
        </RightSide>
      </Workspace>

      <Overlay>
        <Dialog role="dialog" aria-labelledby="dialog-title" onSubmit={e => e.preventDefault()}>
          <TitleBar><TagPlus /><Title id="dialog-title">New code</Title><button type="button" aria-label="Close"><Close /></button></TitleBar>
          <DialogBody>
            <Group $space={8}>
              <Legend><label htmlFor="code-name">Code</label></Legend>
              <CodeField>
                <CodeInput id="code-name" defaultValue="Unemployment" />
                <TextCursor />
              </CodeField>
            </Group>
            <Group $space={16}>
              <Legend>Color</Legend>
              <Palette>
                <Chosen />
                <Swatches>{swatches.map(c => <Swatch key={c} type="button" $c={c} aria-label={c} />)}</Swatches>
                <WheelButtons>
                  <button type="button" aria-label="Color wheel"><Wheel /></button>
                  <button type="button" aria-label="Custom color"><PlusCircle c="#2e3133" p="#fff" /></button>
                </WheelButtons>
              </Palette>
              <Check><Box type="checkbox" />Use as default color for new codes</Check>
              <Check $off><Box type="checkbox" disabled />Use color of parent code</Check>
            </Group>
            <Section>
              <SectionLabel htmlFor="memo"><Chevron s={7} />Code memo</SectionLabel>
              <Memo id="memo" />
            </Section>
            <Section>
              <SectionLabel htmlFor="comment"><Chevron s={7} />Comment on the coded segment</SectionLabel>
              <Memo id="comment" />
            </Section>
            <DialogButtons>
              <DialogButton type="submit">OK</DialogButton>
              <DialogButton type="button">Additional code</DialogButton>
              <DialogButton type="button">Cancel</DialogButton>
            </DialogButtons>
          </DialogBody>
        </Dialog>
      </Overlay>
      <PlayerShade />
    </Page>
  );
}
